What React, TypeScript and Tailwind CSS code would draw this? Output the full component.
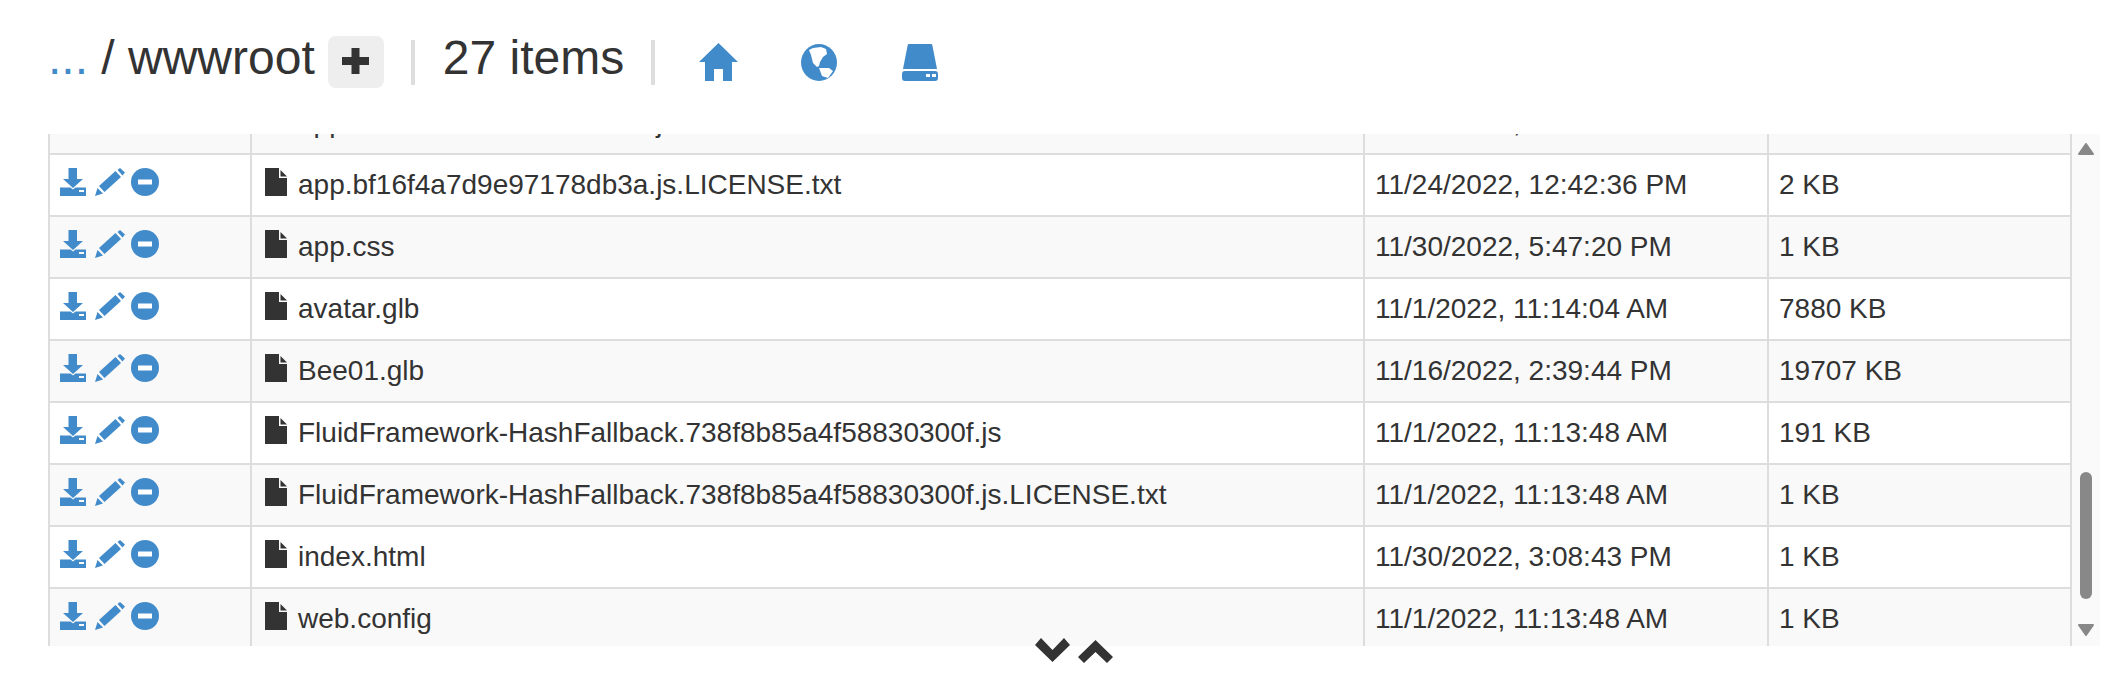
const rows = [
  ["app.bf16f4a7d9e97178db3a.js.LICENSE.txt", "11/24/2022, 12:42:36 PM", "2 KB"],
  ["app.css", "11/30/2022, 5:47:20 PM", "1 KB"],
  ["avatar.glb", "11/1/2022, 11:14:04 AM", "7880 KB"],
  ["Bee01.glb", "11/16/2022, 2:39:44 PM", "19707 KB"],
  ["FluidFramework-HashFallback.738f8b85a4f58830300f.js", "11/1/2022, 11:13:48 AM", "191 KB"],
  ["FluidFramework-HashFallback.738f8b85a4f58830300f.js.LICENSE.txt", "11/1/2022, 11:13:48 AM", "1 KB"],
  ["index.html", "11/30/2022, 3:08:43 PM", "1 KB"],
  ["web.config", "11/1/2022, 11:13:48 AM", "1 KB"],
];

function Download() {
  return (
    <svg width="26" height="28" viewBox="0 0 26 28" fill="#428bca" className="block">
      <path d="M8.500 0h8.500v11h6l-10 9L3 11h5.500z" />
      <path fillRule="evenodd" d="M0 19.500h10.500l2.500 2 2.500-2H26V28H0zM19 22v2h5v-2z" />
    </svg>
  );
}
function Pencil() {
  return (
    <svg width="30" height="28" viewBox="0 0 30 28" fill="#428bca" className="block">
      <path d="M0 28l2.500-8 5.500 5.500z" />
      <path d="M4 18L20.500 3l5.500 6L9.500 24z" />
      <path d="M22.500 2L25 0l5 4.500-2.500 3z" />
    </svg>
  );
}
function Minus() {
  return (
    <svg width="28" height="28" viewBox="0 0 28 28" className="block">
      <circle cx="14" cy="14" r="14" fill="#428bca" />
      <rect x="7" y="11.500" width="14" height="5" fill="#fff" />
    </svg>
  );
}
function FileIcon() {
  return (
    <svg width="22" height="28" viewBox="0 0 22 28" fill="#333" className="block">
      <path d="M0 0h14v10h8v18H0z" />
      <path d="M15.500 2l6.500 6.500h-6.500z" />
    </svg>
  );
}
function Home() {
  return (
    <svg width="39" height="38" viewBox="0 0 39 38" fill="#428bca" className="block">
      <path fillRule="evenodd" d="M19.500 0L39 19h-6v19H24V26h-9v12H6V19H0z" />
    </svg>
  );
}
function Globe() {
  return (
    <svg width="36" height="37" viewBox="0 0 36 37" className="block">
      <ellipse cx="18" cy="18.500" rx="18" ry="18.500" fill="#428bca" />
      <path fill="#fff" d="M8 6l4-2 8-1 5 2 1 5-4 3-3 5-1 4-2 1-4-4-2-8z" />
      <path fill="#fff" d="M18 24l10 0 4 3-5 7-6-2z" />
    </svg>
  );
}
function Drive() {
  return (
    <svg width="36" height="37" viewBox="0 0 36 37" fill="#428bca" className="block">
      <path d="M7 0h22q1 0 1.300 1L35 25H1L5.700 1Q6 0 7 0z" />
      <path fillRule="evenodd" d="M3 27h30q3 0 3 3v4q0 3-3 3H3q-3 0-3-3v-4q0-3 3-3zM24 30v3h4v-3zM30 30v3h4v-3z" />
    </svg>
  );
}
function Chevron({ up }: { up?: boolean }) {
  return (
    <svg width="35" height="24" viewBox="0 0 35 24" fill="#333" className="block">
      <path d={up ? "M0 17L17.500 0 35 17l-6 6-11.500-11L6 23z" : "M0 7l6-7 11.500 12L29 0l6 7-17.500 17z"} />
    </svg>
  );
}

function Row({ name, date, size, striped, clipped }: { name: string; date: string; size: string; striped: boolean; clipped?: boolean }) {
  return (
    <tr className={`${striped ? "bg-[#f9f9f9]" : "bg-white"} h-[62px]`}>
      <td className="border-2 border-[#ddd] pl-[10px] align-top pt-[13px]">
        {!clipped && (
          <div className="flex items-center">
            <Download />
            <div className="ml-[9px]">
              <Pencil />
            </div>
            <div className="ml-[6px]">
              <Minus />
            </div>
          </div>
        )}
      </td>
      <td className="border-2 border-[#ddd] pl-[13px] align-top pt-[13px]">
        <div className="flex items-start gap-[11px]">
          <FileIcon />
          <span className="mt-[2px] leading-[30px]">{name}</span>
        </div>
      </td>
      <td className="border-2 border-[#ddd] pl-[10px] align-top pt-[15px] leading-[30px]">{date}</td>
      <td className="border-2 border-[#ddd] pl-[10px] align-top pt-[15px] leading-[30px]">{size}</td>
    </tr>
  );
}

export default function App() {
  return (
    <div className="h-[680px] w-[2104px] overflow-hidden bg-white font-['Liberation_Sans',Arial,sans-serif] text-[#333]">
      <header className="flex h-[134px] items-center pb-[10px] pl-[48px]">
        <h1 className="flex items-center text-[48px] leading-[56px] font-normal">
          <span className="mb-[8px] whitespace-pre">
            <span className="text-[#428bca]">...</span> / wwwroot
          </span>
          <span className="ml-[13px] flex h-[52px] w-[56px] items-center justify-center rounded-[8px] bg-[#eee] pb-[2px]">
            <svg width="27" height="26" viewBox="0 0 27 26" fill="#333"><path d="M9.500 0h8v9h9.500v8h-9.500v9h-8v-9H0V9h9.500z" /></svg>
          </span>
          <span className="ml-[27px] h-[45px] w-[4px] bg-[#ddd]" />
          <span className="mb-[8px] ml-[28px]">27 items</span>
          <span className="ml-[27px] h-[45px] w-[4px] bg-[#ddd]" />
          <span className="ml-[44px] flex items-center">
            <Home />
            <div className="ml-[63px]">
              <Globe />
            </div>
            <div className="ml-[65px]">
              <Drive />
            </div>
          </span>
        </h1>
      </header>
      <div className="flex h-[512px] pl-[48px]">
        <div className="h-full w-[2024px] overflow-hidden">
          <table className="mt-[-43px] w-full table-fixed border-collapse text-[28px]">
            <colgroup>
              <col className="w-[202px]" />
              <col className="w-[1113px]" />
              <col className="w-[404px]" />
              <col />
            </colgroup>
            <tbody>
              <Row name="app.bf16f4a7d9e97178db3a.js" date="11/24/2022, 12:42:36 PM" size="" striped clipped />
              {rows.map((r, i) => (
                <Row key={r[0]} name={r[0]} date={r[1]} size={r[2]} striped={i % 2 === 1} />
              ))}
            </tbody>
          </table>
        </div>
        <div className="flex h-full w-[28px] flex-col items-center bg-[#fafafa] pt-[9px]">
          <svg width="16" height="12" viewBox="0 0 16 12" fill="#888" stroke="#888" strokeWidth="2" strokeLinejoin="round" className="block"><path d="M8 1l7 10H1z" /></svg>
          <div className="mt-[317px] h-[127px] w-[12px] rounded-[6px] bg-[#888]" />
          <svg width="16" height="12" viewBox="0 0 16 12" fill="#888" stroke="#888" strokeWidth="2" strokeLinejoin="round" className="mt-[25px] block"><path d="M1 1h14L8 11z" /></svg>
        </div>
      </div>
      <div className="relative flex justify-center pl-[44px]">
        <div className="absolute top-[-8px] flex items-start gap-[8px]">
          <Chevron />
          <div className="mt-[2px]">
            <Chevron up />
          </div>
        </div>
      </div>
    </div>
  );
}
